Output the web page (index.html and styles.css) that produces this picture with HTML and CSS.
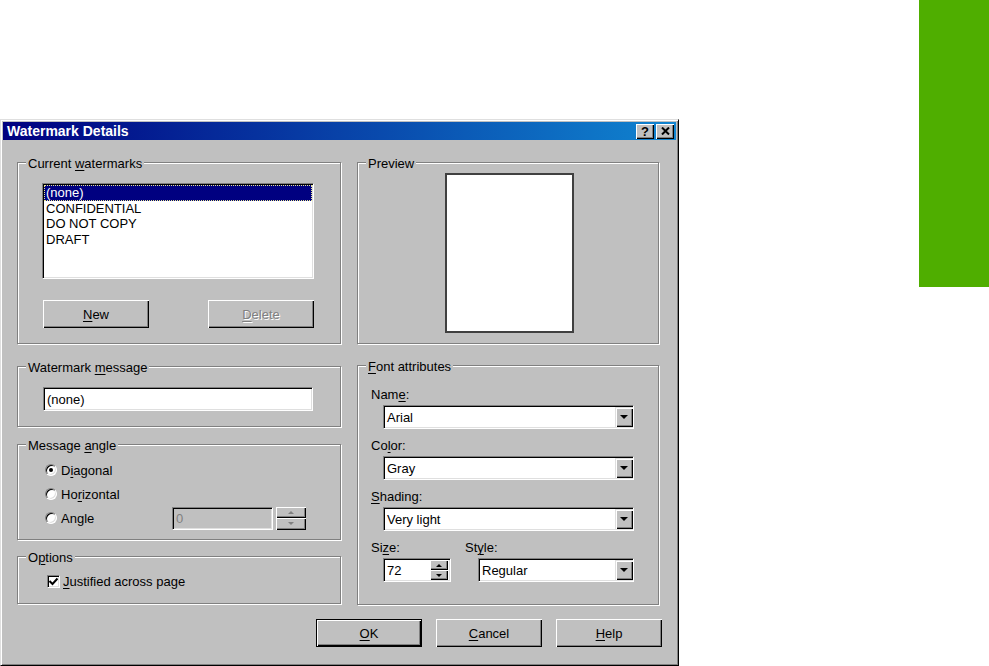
FILE: index.html
```html
<!DOCTYPE html>
<html lang="en">
<head>
    <meta charset="UTF-8">
    <title>Watermark Details</title>
    <link rel="stylesheet" href="styles.css">
</head>
<body>

    <div class="page">
        <div class="dialog">
            <div class="titlebar">
                <span class="title">Watermark Details</span>
                <div class="title-buttons">
                    <span class="tbtn tbtn-help">?</span>
                    <span class="tbtn">
                        <svg width="9" height="8" viewBox="0 0 9 8"><path d="M1 0.5 L8 7.5 M8 0.5 L1 7.5" stroke="#000" stroke-width="2"/></svg>
                    </span>
                </div>
            </div>

            <div class="dialog-body">
                <div class="col">
                    <div class="group group-current">
                        <div class="group-title">Current <u>w</u>atermarks</div>
                        <ul class="listbox">
                            <li class="selected">(none)</li>
                            <li>CONFIDENTIAL</li>
                            <li>DO NOT COPY</li>
                            <li>DRAFT</li>
                        </ul>
                        <div class="list-buttons">
                            <button class="btn"><u>N</u>ew</button>
                            <button class="btn" disabled><u>D</u>elete</button>
                        </div>
                    </div>

                    <div class="group group-message">
                        <div class="group-title">Watermark <u>m</u>essage</div>
                        <div class="textbox message-box">(none)</div>
                    </div>

                    <div class="group group-angle">
                        <div class="group-title">Message <u>a</u>ngle</div>
                        <div class="radios">
                            <div class="radio-row">
                                <span class="radio checked"></span>
                                <span>D<u>i</u>agonal</span>
                            </div>
                            <div class="radio-row">
                                <span class="radio"></span>
                                <span>Ho<u>r</u>izontal</span>
                            </div>
                            <div class="radio-row">
                                <span class="radio"></span>
                                <span class="angle-label">Angle</span>
                                <div class="textbox angle-box">0</div>
                                <div class="spin spin-disabled">
                                    <span class="spin-btn"><span class="arrow-up"></span></span>
                                    <span class="spin-btn"><span class="arrow-down"></span></span>
                                </div>
                            </div>
                        </div>
                    </div>

                    <div class="group group-options">
                        <div class="group-title">O<u>p</u>tions</div>
                        <div class="check-row">
                            <span class="checkbox">
                                <svg width="9" height="9" viewBox="0 0 9 9"><path d="M0.5 4 L3.5 7 L8.5 1.5" fill="none" stroke="#000" stroke-width="2"/></svg>
                            </span>
                            <span><u>J</u>ustified across page</span>
                        </div>
                    </div>
                </div>

                <div class="col">
                    <div class="group group-preview">
                        <div class="group-title">Preview</div>
                        <div class="preview-page"></div>
                    </div>

                    <div class="group group-font">
                        <div class="group-title"><u>F</u>ont attributes</div>
                        <div class="fields">
                            <div class="field">
                                <div class="field-label">Nam<u>e</u>:</div>
                                <div class="combo">Arial<span class="combo-btn"><span class="arrow-down"></span></span></div>
                            </div>
                            <div class="field">
                                <div class="field-label">Co<u>l</u>or:</div>
                                <div class="combo">Gray<span class="combo-btn"><span class="arrow-down"></span></span></div>
                            </div>
                            <div class="field">
                                <div class="field-label"><u>S</u>hading:</div>
                                <div class="combo">Very light<span class="combo-btn"><span class="arrow-down"></span></span></div>
                            </div>
                            <div class="field-row">
                                <div class="field field-size">
                                    <div class="field-label">Si<u>z</u>e:</div>
                                    <div class="textbox size-box">72
                                        <div class="spin">
                                            <span class="spin-btn"><span class="arrow-up"></span></span>
                                            <span class="spin-btn"><span class="arrow-down"></span></span>
                                        </div>
                                    </div>
                                </div>
                                <div class="field field-style">
                                    <div class="field-label">St<u>y</u>le:</div>
                                    <div class="combo combo-style">Regular<span class="combo-btn"><span class="arrow-down"></span></span></div>
                                </div>
                            </div>
                        </div>
                    </div>
                </div>

                <div class="actions">
                    <button class="btn btn-default"><u>O</u>K</button>
                    <button class="btn"><u>C</u>ancel</button>
                    <button class="btn"><u>H</u>elp</button>
                </div>
            </div>
        </div>

        <div class="side-tab"></div>
    </div>

</body>
</html>
```

FILE: styles.css
```css
body {
    margin: 0;
    background-color: #fff;
    font-family: "Liberation Sans", Arial, sans-serif;
    font-size: 13px;
    color: #000;
}
u {
    text-decoration-thickness: 1px;
    text-underline-offset: 2px;
}
.page {
    display: flex;
    justify-content: space-between;
    align-items: flex-start;
}
.side-tab {
    width: 70px;
    height: 287px;
    background-color: #4fae00;
}

/* window frame */
.dialog {
    box-sizing: border-box;
    width: 679px;
    height: 547px;
    margin-top: 119px;
    padding: 2px;
    background-color: #c0c0c0;
    border: 1px solid;
    border-color: #dfdfdf #000 #000 #dfdfdf;
    box-shadow: inset 1px 1px 0 #fff, inset -1px -1px 0 #808080;
}
.titlebar {
    display: flex;
    justify-content: space-between;
    align-items: center;
    height: 18px;
    padding: 0 2px 0 4px;
    background: linear-gradient(to right, #000080, #1084d0);
}
.title {
    color: #fff;
    font-weight: bold;
    font-size: 14px;
}
.title-buttons {
    display: flex;
    gap: 2px;
}
.tbtn {
    box-sizing: border-box;
    display: flex;
    align-items: center;
    justify-content: center;
    width: 18px;
    height: 15px;
    background-color: #c0c0c0;
    box-shadow: inset 1px 1px 0 #fff, inset -1px -1px 0 #000, inset -2px -2px 0 #808080;
}
.tbtn-help {
    font-weight: bold;
    font-size: 13px;
    line-height: 13px;
}

/* layout */
.dialog-body {
    display: grid;
    grid-template-columns: 324px 302px;
    column-gap: 16px;
    padding: 22px 0 0 14px;
}
.col {
    display: flex;
    flex-direction: column;
}

/* group boxes */
.group {
    box-sizing: border-box;
    border: 1px solid #808080;
    box-shadow: 1px 1px 0 #fff, inset 1px 1px 0 #fff;
}
.group-title {
    width: max-content;
    margin: -7px 0 0 8px;
    padding: 0 2px;
    line-height: 15px;
    background-color: #c0c0c0;
}
.group-current { height: 182px; }
.group-message { height: 61px; margin-top: 22px; }
.group-angle { height: 96px; margin-top: 17px; }
.group-options { height: 48px; margin-top: 16px; }
.group-preview { height: 182px; }
.group-font { height: 240px; margin-top: 21px; }

/* sunken fields */
.listbox,
.textbox,
.combo {
    box-sizing: border-box;
    background-color: #fff;
    border: 1px solid;
    border-color: #808080 #fff #fff #808080;
    box-shadow: inset 1px 1px 0 #000, inset -1px -1px 0 #dfdfdf;
}
.listbox {
    list-style: none;
    width: 272px;
    height: 96px;
    margin: 12px 0 0 24px;
    padding: 1px;
}
.listbox li {
    line-height: 15.5px;
    padding-left: 2px;
}
.listbox li.selected {
    background-color: #000080;
    color: #fff;
    outline: 1px dotted #e8e890;
    outline-offset: -1px;
}
.list-buttons {
    display: flex;
    justify-content: space-between;
    width: 271px;
    margin: 21px 0 0 25px;
}

/* buttons */
.btn {
    box-sizing: border-box;
    width: 106px;
    height: 28px;
    padding: 0;
    border: none;
    background-color: #c0c0c0;
    font: inherit;
    color: #000;
    box-shadow: inset 1px 1px 0 #fff, inset -1px -1px 0 #000, inset -2px -2px 0 #808080;
}
.btn:disabled {
    color: #808080;
    text-shadow: 1px 1px 0 #fff;
}
.btn-default {
    box-shadow: inset 0 0 0 1px #000, inset 2px 2px 0 #fff, inset -2px -2px 0 #000, inset -3px -3px 0 #808080;
}
.actions {
    grid-column: 1 / -1;
    display: flex;
    justify-content: flex-end;
    gap: 14px;
    margin: 14px -3px 0 0;
}

.textbox {
    display: flex;
    align-items: center;
    padding-left: 3px;
}
.message-box {
    width: 270px;
    height: 24px;
    margin: 12px 0 0 25px;
}

/* radios */
.radios {
    margin-top: 5px;
}
.radio-row {
    display: flex;
    align-items: center;
    height: 24px;
    padding-left: 27px;
}
.radio {
    box-sizing: border-box;
    position: relative;
    width: 12px;
    height: 12px;
    margin-right: 4px;
    border-radius: 50%;
    background-color: #fff;
    border: 1px solid;
    border-color: #808080 #fff #fff #808080;
    box-shadow: inset 1px 1px 0 #000, inset -1px -1px 0 #dfdfdf;
}
.radio.checked::after {
    content: "";
    position: absolute;
    left: 3px;
    top: 3px;
    width: 4px;
    height: 4px;
    border-radius: 50%;
    background-color: #000;
}
.angle-label {
    width: 111px;
}
.angle-box {
    width: 101px;
    height: 23px;
    background-color: #c0c0c0;
    color: #808080;
}

/* spin buttons */
.spin {
    display: flex;
    flex-direction: column;
}
.spin-disabled {
    width: 30px;
    height: 23px;
    margin-left: 3px;
}
.spin-btn {
    box-sizing: border-box;
    flex: 1;
    display: flex;
    align-items: center;
    justify-content: center;
    background-color: #c0c0c0;
    box-shadow: inset 1px 1px 0 #fff, inset -1px -1px 0 #000, inset -2px -2px 0 #808080;
}
.arrow-up,
.arrow-down {
    width: 0;
    height: 0;
    border-left: 3px solid transparent;
    border-right: 3px solid transparent;
}
.arrow-up { border-bottom: 3px solid #000; }
.arrow-down { border-top: 3px solid #000; }
.spin-disabled .arrow-up { border-bottom-color: #808080; }
.spin-disabled .arrow-down { border-top-color: #808080; }

/* checkbox */
.check-row {
    display: flex;
    align-items: center;
    height: 24px;
    margin-top: 4px;
    padding-left: 29px;
}
.checkbox {
    box-sizing: border-box;
    display: flex;
    align-items: center;
    justify-content: center;
    width: 13px;
    height: 13px;
    margin-right: 3px;
    background-color: #fff;
    border: 1px solid;
    border-color: #808080 #fff #fff #808080;
    box-shadow: inset 1px 1px 0 #000, inset -1px -1px 0 #dfdfdf;
}

/* preview */
.preview-page {
    box-sizing: border-box;
    width: 129px;
    height: 160px;
    margin: 2px 0 0 87px;
    background-color: #fff;
    border: 2px solid #404040;
}

/* font attributes */
.fields {
    margin-top: 13px;
}
.field {
    padding-left: 13px;
    margin-bottom: 9px;
}
.field-label {
    line-height: 16px;
    margin-bottom: 2px;
}
.combo {
    display: flex;
    align-items: center;
    justify-content: space-between;
    width: 251px;
    height: 24px;
    margin-left: 12px;
    padding-left: 3px;
}
.combo-btn {
    box-sizing: border-box;
    display: flex;
    align-items: center;
    justify-content: center;
    width: 18px;
    height: 20px;
    background-color: #c0c0c0;
    box-shadow: inset 1px 1px 0 #dfdfdf, inset 2px 2px 0 #fff, inset -1px -1px 0 #000, inset -2px -2px 0 #808080;
}
.combo-btn .arrow-down {
    border-left-width: 4px;
    border-right-width: 4px;
    border-top-width: 4px;
}
.field-row {
    display: flex;
}
.field-size {
    width: 94px;
    margin-bottom: 0;
}
.field-style {
    padding-left: 0;
    margin-bottom: 0;
}
.size-box {
    justify-content: space-between;
    width: 68px;
    height: 24px;
    margin-left: 12px;
    padding-right: 2px;
}
.size-box .spin {
    width: 18px;
    height: 20px;
}
.combo-style {
    width: 156px;
    margin-left: 13px;
}
```
